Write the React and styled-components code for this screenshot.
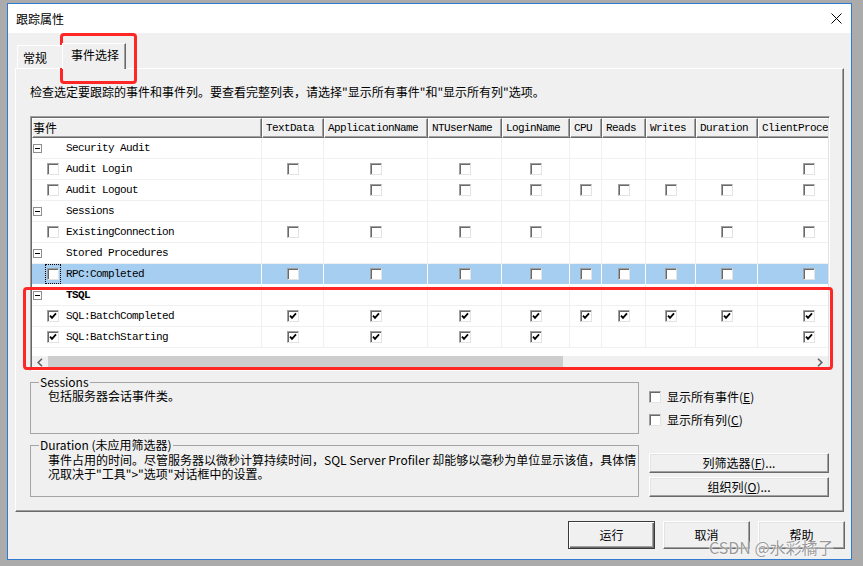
import React from "react";
import styled, { createGlobalStyle } from "styled-components";

const cjk = `"Noto Sans CJK SC", "Microsoft YaHei", sans-serif`;
const mono = `"Liberation Mono", "DejaVu Sans Mono", monospace`;

const GlobalStyle = createGlobalStyle`
  html, body { margin: 0; padding: 0; background: #ababab; }
  body { font-family: ${cjk}; font-size: 12px; color: #000; }
  * { box-sizing: border-box; }
`;

const COLS = ["TextData", "ApplicationName", "NTUserName", "LoginName", "CPU", "Reads", "Writes", "Duration", "ClientProcessID"];
const TEMPLATE = "230px 62px 104px 74px 68px 32px 44px 50px 62px 102px";

const ROWS = [
  { type: "group", label: "Security Audit" },
  { type: "item", label: "Audit Login", checked: false, cells: [0, 0, 0, 0, null, null, null, null, 0] },
  { type: "item", label: "Audit Logout", checked: false, cells: [null, 0, 0, 0, 0, 0, 0, 0, 0] },
  { type: "group", label: "Sessions" },
  { type: "item", label: "ExistingConnection", checked: false, cells: [0, 0, 0, 0, null, null, null, 0, 0] },
  { type: "group", label: "Stored Procedures" },
  { type: "item", label: "RPC:Completed", checked: false, selected: true, focus: true, cells: [0, 0, 0, 0, 0, 0, 0, 0, 0] },
  { type: "group", label: "TSQL", bold: true },
  { type: "item", label: "SQL:BatchCompleted", checked: true, cells: [1, 1, 1, 1, 1, 1, 1, 1, 1] },
  { type: "item", label: "SQL:BatchStarting", checked: true, cells: [1, 1, 1, 1, null, null, null, null, 1] },
];

const Desktop = styled.div`
  position: relative;
  width: 863px;
  height: 566px;
  overflow: hidden;
  padding: 3px 0 0 7px;
`;

const Window = styled.div`
  width: 845px;
  height: 557px;
  border: 1px solid #2f7bd0;
  background: #f0f0f0;
  display: flex;
  flex-direction: column;
`;

const TitleBar = styled.div`
  height: 29px;
  flex-shrink: 0;
  background: #fff;
  display: flex;
  align-items: center;
  justify-content: space-between;
  padding: 0 9px 0 8px;
`;

const Title = styled.span`
  font-size: 12px;
  line-height: 16px;
`;

const Body = styled.div`
  flex: 1;
  display: flex;
  flex-direction: column;
  padding: 10px 6px 0 7px;
`;

const TabStrip = styled.div`
  height: 25px;
  display: flex;
  align-items: flex-end;
  padding-left: 2px;
`;

const Tab = styled.div`
  position: relative;
  z-index: ${(p) => (p.$active ? 2 : 1)};
  height: ${(p) => (p.$active ? "26px" : "23px")};
  margin-bottom: ${(p) => (p.$active ? "-1px" : "0")};
  margin-left: ${(p) => (p.$active ? "-2px" : "0")};
  width: ${(p) => p.$w}px;
  padding: ${(p) => (p.$active ? "3px 0 0 8px" : "4px 0 0 5px")};
  background: #f0f0f0;
  border-top: 1px solid #fff;
  border-left: 1px solid #fff;
  border-right: 1px solid #696969;
  box-shadow: inset -1px 0 0 #a0a0a0;
  font-size: 12px;
  line-height: 16px;
`;

const Panel = styled.div`
  width: 829px;
  height: 444px;
  border: 1px solid;
  border-color: #fff #696969 #696969 #fff;
  box-shadow: inset -1px -1px 0 #a0a0a0;
  padding: 15px 13px 0 14px;
  display: flex;
  flex-direction: column;
`;

const Instruction = styled.div`
  font-size: 12px;
  line-height: 16px;
  height: 16px;
  margin-bottom: 16px;
  white-space: nowrap;
`;

const GridFrame = styled.div`
  width: 800px;
  height: 255px;
  flex-shrink: 0;
  border: 1px solid;
  border-color: #a0a0a0 #fff #fff #a0a0a0;
  padding: 1px;
  box-shadow: inset 1px 1px 0 #696969, inset -1px -1px 0 #e3e3e3;
  background: #fff;
  display: flex;
  flex-direction: column;
`;

const Viewport = styled.div`
  flex: 1;
  min-height: 0;
  overflow: hidden;
  display: flex;
  flex-direction: column;
`;

const HeaderRow = styled.div`
  display: grid;
  grid-template-columns: ${TEMPLATE};
  width: 828px;
  height: 20px;
  flex-shrink: 0;
`;

const HeaderCell = styled.div`
  height: 20px;
  background: #f0f0f0;
  border-top: 1px solid #fff;
  border-left: 1px solid #fff;
  border-right: 1px solid #696969;
  border-bottom: 1px solid #696969;
  box-shadow: inset -1px -1px 0 #a0a0a0;
  padding-left: ${(p) => (p.$first ? "0" : "3px")};
  font-family: ${(p) => (p.$first ? cjk : mono)};
  font-size: ${(p) => (p.$first ? "12px" : "11px")};
  letter-spacing: ${(p) => (p.$first ? "0" : "-0.6px")};
  line-height: 18px;
  white-space: nowrap;
  overflow: hidden;
`;

const Row = styled.div`
  display: grid;
  grid-template-columns: ${TEMPLATE};
  width: 828px;
  height: 21px;
  flex-shrink: 0;
  background: ${(p) => (p.$selected ? "#a6cef0" : "#fff")};
  border-bottom: 1px solid ${(p) => (p.$selected ? "#fff" : "#f0f0f0")};
`;

const Cell = styled.div`
  display: flex;
  align-items: center;
  justify-content: center;
  border-right: 1px solid ${(p) => (p.$selected ? "#fff" : "#f0f0f0")};
`;

const NameCell = styled.div`
  display: flex;
  align-items: center;
  border-right: 1px solid ${(p) => (p.$selected ? "#fff" : "#f0f0f0")};
`;

const ExpanderSlot = styled.div`
  width: 14px;
  height: 100%;
  display: flex;
  align-items: center;
  padding-left: 1px;
`;

const CheckSlot = styled.div`
  width: 16px;
  height: 100%;
  margin-left: -1px;
  display: flex;
  align-items: center;
  justify-content: center;
  outline: ${(p) => (p.$focus ? "1px dotted #000" : "none")};
  outline-offset: -1px;
`;

const Label = styled.span`
  margin-left: 5px;
  font-family: ${mono};
  font-size: 11px;
  letter-spacing: -0.6px;
  font-weight: ${(p) => (p.$bold ? 700 : 400)};
  line-height: 14px;
  white-space: nowrap;
`;

const Blank = styled.div`
  flex: 1;
  background: #fff;
`;

const Scrollbar = styled.div`
  height: 13px;
  flex-shrink: 0;
  display: flex;
  background: #f0f0f0;
`;

const ScrollArrow = styled.div`
  width: 16px;
  display: flex;
  align-items: center;
  justify-content: center;
`;

const Thumb = styled.div`
  width: 515px;
  height: 12px;
  background: #cdcdcd;
`;

const Track = styled.div`
  flex: 1;
`;

const Box = styled.span`
  width: 12px;
  height: 12px;
  flex-shrink: 0;
  display: inline-flex;
  align-items: center;
  justify-content: center;
  background: #fff;
  border: 1px solid;
  border-color: #a0a0a0 #e3e3e3 #e3e3e3 #a0a0a0;
  box-shadow: inset 1px 1px 0 #696969;
`;

const BottomArea = styled.div`
  display: flex;
  margin-top: 11px;
  gap: 10px;
`;

const LeftCol = styled.div`
  width: 609px;
  display: flex;
  flex-direction: column;
  gap: 11px;
`;

const GroupBox = styled.div`
  position: relative;
  height: 52px;
  border: 1px solid #a5a5a5;
  padding: ${(p) => (p.$tight ? "7px 0 0 17px" : "5px 0 0 17px")};
  font-size: 12px;
  line-height: ${(p) => (p.$tight ? "14px" : "16px")};
  white-space: nowrap;
`;

const Legend = styled.span`
  position: absolute;
  top: -8px;
  left: 8px;
  padding: 0 1px;
  background: #f0f0f0;
  font-size: 12px;
  line-height: 14px;
`;

const RightCol = styled.div`
  width: 180px;
  padding-top: 9px;
  display: flex;
  flex-direction: column;
  justify-content: space-between;
`;

const OptionList = styled.div`
  display: flex;
  flex-direction: column;
  gap: 11px;
`;

const Option = styled.label`
  display: flex;
  align-items: center;
  height: 12px;
  gap: 6px;
  font-size: 12px;
  line-height: 14px;
  white-space: nowrap;
`;

const ButtonStack = styled.div`
  display: flex;
  flex-direction: column;
  gap: 4px;
`;

const Button = styled.button`
  width: ${(p) => p.$w || "100%"};
  height: ${(p) => p.$h || "20px"};
  padding: 0;
  font-family: ${cjk};
  font-size: 12px;
  line-height: 14px;
  color: #000;
  background: #f0f0f0;
  border: 1px solid;
  border-color: ${(p) => (p.$default ? "#3a3a3a" : "#fff #696969 #696969 #fff")};
  box-shadow: ${(p) =>
    p.$default
      ? "inset 1px 1px 0 #fff, inset -1px -1px 0 #696969, inset -2px -2px 0 #a0a0a0"
      : "inset -1px -1px 0 #a0a0a0, inset 1px 1px 0 #e3e3e3"};
`;

const Footer = styled.div`
  display: flex;
  justify-content: flex-end;
  gap: 8px;
  margin-top: 9px;
`;

const RedMark = styled.div`
  position: absolute;
  left: ${(p) => p.$x}px;
  top: ${(p) => p.$y}px;
  width: ${(p) => p.$w}px;
  height: ${(p) => p.$h}px;
  border: 3px solid #ff2626;
  border-radius: 4px;
  pointer-events: none;
`;

const Watermark = styled.div`
  position: absolute;
  left: 709px;
  top: 537px;
  font-family: ${cjk};
  font-size: 16px;
  line-height: 20px;
  color: rgba(120, 120, 120, 0.75);
  text-shadow: 0 0 2px #fff, 0 0 1px #fff;
  white-space: nowrap;
  pointer-events: none;
`;

function CheckBox({ checked }) {
  return (
    <Box>
      {checked ? (
        <svg width="8" height="8" viewBox="0 0 8 8">
          <polyline points="1,3.6 3,5.8 7,1.4" fill="none" stroke="#000" strokeWidth="1.8" />
        </svg>
      ) : null}
    </Box>
  );
}

function Expander() {
  return (
    <svg width="9" height="9" viewBox="0 0 9 9">
      <rect x="0.5" y="0.5" width="8" height="8" fill="#fff" stroke="#8e8e8e" />
      <line x1="2" y1="4.5" x2="7" y2="4.5" stroke="#000" />
    </svg>
  );
}

function Chevron({ dir }) {
  return (
    <svg width="6" height="9" viewBox="0 0 6 9">
      <polyline
        points={dir === "left" ? "5,0.8 1.2,4.5 5,8.2" : "1,0.8 4.8,4.5 1,8.2"}
        fill="none"
        stroke="#606060"
        strokeWidth="1.6"
      />
    </svg>
  );
}

function CloseIcon() {
  return (
    <svg width="11" height="11" viewBox="0 0 11 11">
      <line x1="0.5" y1="0.5" x2="10.5" y2="10.5" stroke="#000" strokeWidth="1" />
      <line x1="10.5" y1="0.5" x2="0.5" y2="10.5" stroke="#000" strokeWidth="1" />
    </svg>
  );
}

export default function App() {
  return (
    <Desktop>
      <GlobalStyle />
      <Window>
        <TitleBar>
          <Title>跟踪属性</Title>
          <CloseIcon />
        </TitleBar>
        <Body>
          <TabStrip>
            <Tab $w={47}>常规</Tab>
            <Tab $active $w={64}>事件选择</Tab>
          </TabStrip>
          <Panel>
            <Instruction>
              检查选定要跟踪的事件和事件列。要查看完整列表，请选择"显示所有事件"和"显示所有列"选项。
            </Instruction>
            <GridFrame>
              <Viewport>
                <HeaderRow>
                  <HeaderCell $first>事件</HeaderCell>
                  {COLS.map((c) => (
                    <HeaderCell key={c}>{c}</HeaderCell>
                  ))}
                </HeaderRow>
                {ROWS.map((r) => (
                  <Row key={r.label} $selected={r.selected}>
                    <NameCell $selected={r.selected}>
                      <ExpanderSlot>{r.type === "group" ? <Expander /> : null}</ExpanderSlot>
                      <CheckSlot $focus={r.focus}>
                        {r.type === "item" ? <CheckBox checked={r.checked} /> : null}
                      </CheckSlot>
                      <Label $bold={r.bold}>{r.label}</Label>
                    </NameCell>
                    {COLS.map((c, i) => (
                      <Cell key={c} $selected={r.selected}>
                        {r.cells && r.cells[i] !== null ? <CheckBox checked={r.cells[i] === 1} /> : null}
                      </Cell>
                    ))}
                  </Row>
                ))}
                <Blank />
              </Viewport>
              <Scrollbar>
                <ScrollArrow>
                  <Chevron dir="left" />
                </ScrollArrow>
                <Thumb />
                <Track />
                <ScrollArrow>
                  <Chevron dir="right" />
                </ScrollArrow>
              </Scrollbar>
            </GridFrame>
            <BottomArea>
              <LeftCol>
                <GroupBox>
                  <Legend>Sessions</Legend>
                  包括服务器会话事件类。
                </GroupBox>
                <GroupBox $tight>
                  <Legend>Duration (未应用筛选器)</Legend>
                  事件占用的时间。尽管服务器以微秒计算持续时间，SQL Server Profiler 却能够以毫秒为单位显示该值，具体情
                  <br />
                  况取决于"工具"&gt;"选项"对话框中的设置。
                </GroupBox>
              </LeftCol>
              <RightCol>
                <OptionList>
                  <Option>
                    <CheckBox checked={false} />
                    <span>
                      显示所有事件(<u>E</u>)
                    </span>
                  </Option>
                  <Option>
                    <CheckBox checked={false} />
                    <span>
                      显示所有列(<u>C</u>)
                    </span>
                  </Option>
                </OptionList>
                <ButtonStack>
                  <Button>
                    列筛选器(<u>F</u>)...
                  </Button>
                  <Button>
                    组织列(<u>O</u>)...
                  </Button>
                </ButtonStack>
              </RightCol>
            </BottomArea>
          </Panel>
          <Footer>
            <Button $default $w="87px" $h="28px">运行</Button>
            <Button $w="87px" $h="28px">取消</Button>
            <Button $w="87px" $h="28px">帮助</Button>
          </Footer>
        </Body>
      </Window>
      <RedMark $x={60} $y={33} $w={77} $h={51} />
      <RedMark $x={23} $y={287} $w={810} $h={83} />
      <Watermark>CSDN @水彩橘子</Watermark>
    </Desktop>
  );
}
